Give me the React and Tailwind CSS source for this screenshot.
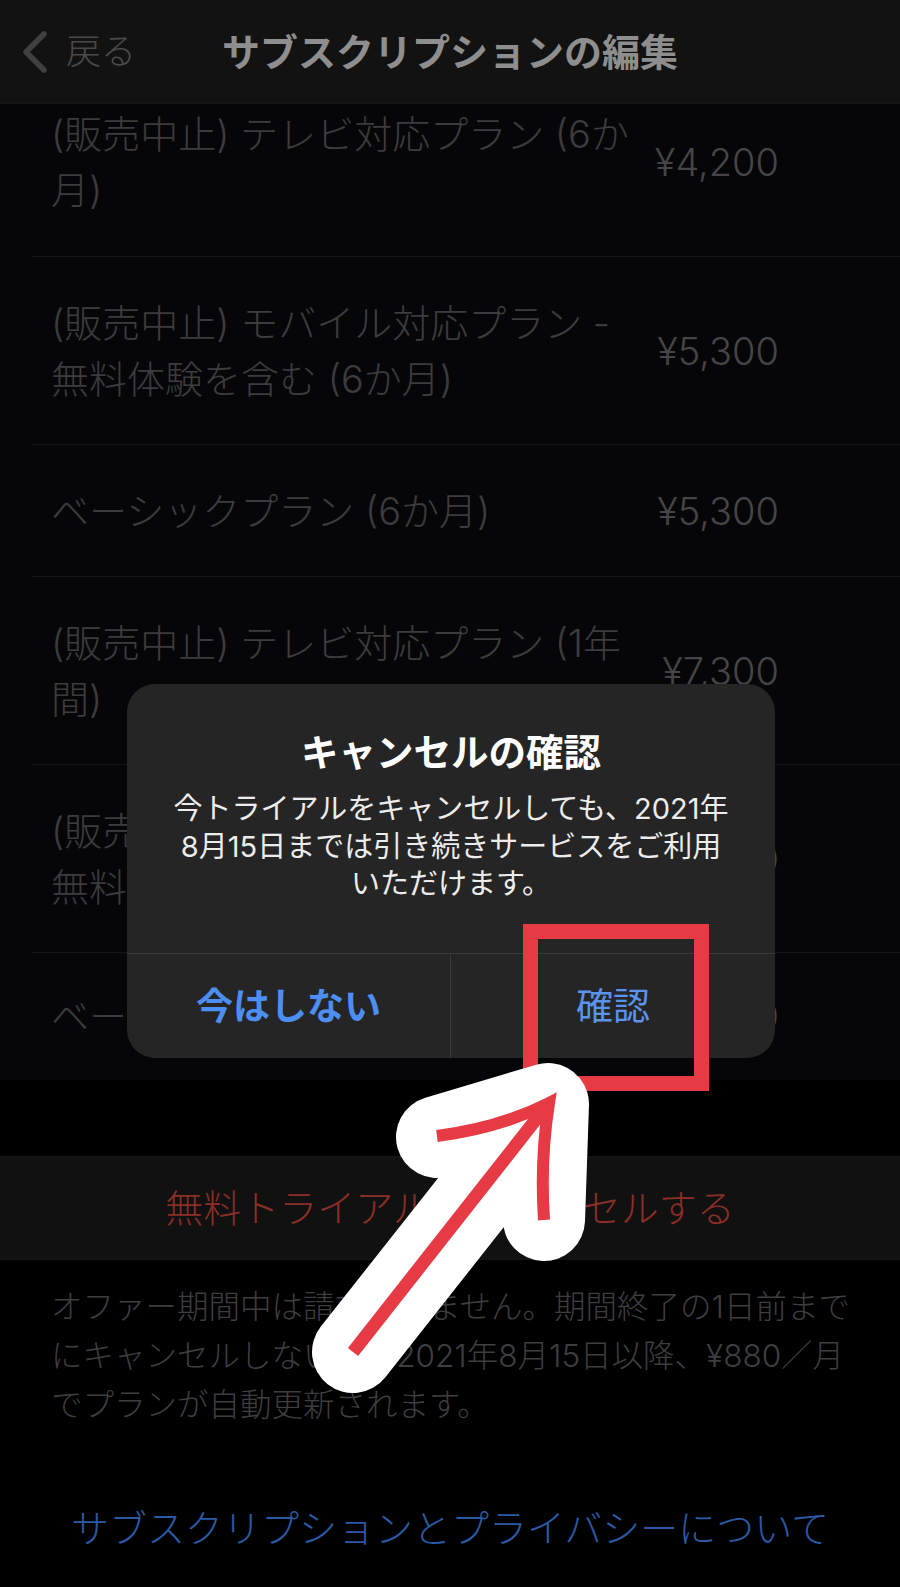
import React from "react";

const FONT = { fontFamily: 'Inter, "Noto Sans CJK JP", "Noto Sans", sans-serif' };

function Row({ lines, price, first }) {
  return (
    <div
      className={
        "flex items-center pl-[51px] pr-[121px] " +
        (first ? "pt-[2px] pb-[38px]" : "py-[37.5px]")
      }
    >
      <div className="flex-1 whitespace-nowrap text-[38px] font-light leading-[56px] text-[#3c3c3e]">
        {lines.map((l, i) => (
          <div key={i}>{l}</div>
        ))}
      </div>
      <div className="shrink-0 text-[38px] font-light leading-[56px] text-[#454547]">{price}</div>
    </div>
  );
}

function Sep() {
  return <div className="ml-[32px] h-px bg-[#151517]" />;
}

export default function App() {
  return (
    <div className="relative w-[900px] h-[1587px] overflow-hidden bg-black" style={FONT}>
      {/* Header */}
      <div className="grid h-[104px] grid-cols-[1fr_auto_1fr] items-center bg-[#121212] border-b border-[#161616]">
        <div className="flex items-center pl-[18px]">
          <svg width="32" height="48" viewBox="0 0 32 48" className="shrink-0">
            <path d="M26 6 L8 24 L26 42" fill="none" stroke="#404040" strokeWidth="5.5" strokeLinecap="round" strokeLinejoin="round" />
          </svg>
          <span className="ml-[16px] text-[35px] font-light leading-none text-[#4a4a4a]">戻る</span>
        </div>
        <div className="text-[38px] font-bold leading-none text-[#8e8e8e]">サブスクリプションの編集</div>
        <div />
      </div>

      {/* Plans list */}
      <div className="bg-[#060608]">
        <Row first lines={["(販売中止) テレビ対応プラン (6か", "月)"]} price="¥4,200" />
        <Sep />
        <Row lines={["(販売中止) モバイル対応プラン -", "無料体験を含む (6か月)"]} price="¥5,300" />
        <Sep />
        <Row lines={["ベーシックプラン (6か月)"]} price="¥5,300" />
        <Sep />
        <Row lines={["(販売中止) テレビ対応プラン (1年", "間)"]} price="¥7,300" />
        <Sep />
        <Row lines={["(販売中止) モバイル対応プラン -", "無料体験を含む (1年間)"]} price="¥9,300" />
        <Sep />
        <div className="flex items-center pl-[51px] pr-[121px] pt-[35px] pb-[36px]">
          <div className="flex-1 whitespace-nowrap text-[38px] font-light leading-[56px] text-[#3c3c3e]">ベーシックプラン (1年間)</div>
          <div className="shrink-0 text-[38px] font-light leading-[56px] text-[#454547]">¥9,800</div>
        </div>
      </div>

      {/* gap */}
      <div className="h-[76px] bg-black" />

      {/* Cancel button */}
      <div className="flex h-[104px] items-center justify-center border-y border-[#151515] bg-[#111112]">
        <span className="text-[38px] font-light leading-none text-[#8a2e27]">無料トライアルをキャンセルする</span>
      </div>

      {/* Footer note */}
      <div className="px-[51px] pt-[22px] text-[31.5px] font-light leading-[49px] text-[#3e3e40] whitespace-nowrap">
        <div>オファー期間中は請求されません。期間終了の1日前まで</div>
        <div>にキャンセルしないと、2021年8月15日以降、¥880／月</div>
        <div>でプランが自動更新されます。</div>
      </div>

      <div className="mt-[74px] text-center text-[38px] font-light leading-[50px] text-[#2b59a3]">
        サブスクリプションとプライバシーについて
      </div>

      {/* Alert dialog */}
      <div className="absolute left-[127px] top-[684px] flex h-[374px] w-[648px] flex-col overflow-hidden rounded-[28px] bg-[#252525]">
        <div className="flex flex-1 flex-col items-center pt-[44px]">
          <div className="text-[37.5px] font-bold leading-[50px] text-white">キャンセルの確認</div>
          <div className="mt-[12px] text-center text-[29px] leading-[37.5px] text-[#ececec]">
            <div>今トライアルをキャンセルしても、2021年</div>
            <div>8月15日までは引き続きサービスをご利用</div>
            <div>いただけます。</div>
          </div>
        </div>
        <div className="flex h-[105px] border-t border-[#3b3b3d]">
          <div className="flex w-1/2 items-center justify-center border-r border-[#3b3b3d]">
            <span className="text-[37px] font-bold leading-none text-[#4d8ef2]">今はしない</span>
          </div>
          <div className="flex w-1/2 items-center justify-center">
            <span className="text-[37px] leading-none text-[#5a93ea]">確認</span>
          </div>
        </div>
      </div>

      {/* Annotation: red box + arrow */}
      <svg className="pointer-events-none absolute left-0 top-0" width="900" height="1587" viewBox="0 0 900 1587">
        <rect x="530.5" y="931.5" width="171" height="152" fill="none" stroke="#e63a44" strokeWidth="15" />
        <g fill="none" stroke="#ffffff" strokeWidth="82" strokeLinecap="round" strokeLinejoin="round">
          <path d="M353 1352 L544 1110" />
          <path d="M437 1137 L548 1104 L544 1220" />
        </g>
        <g fill="none" stroke="#e63a44" strokeLinejoin="miter">
          <path d="M353 1352 L541 1113" strokeWidth="13" />
          <path d="M437 1136 Q500 1128 549 1103 Q540 1160 544 1220" strokeWidth="12" />
        </g>
      </svg>
    </div>
  );
}
